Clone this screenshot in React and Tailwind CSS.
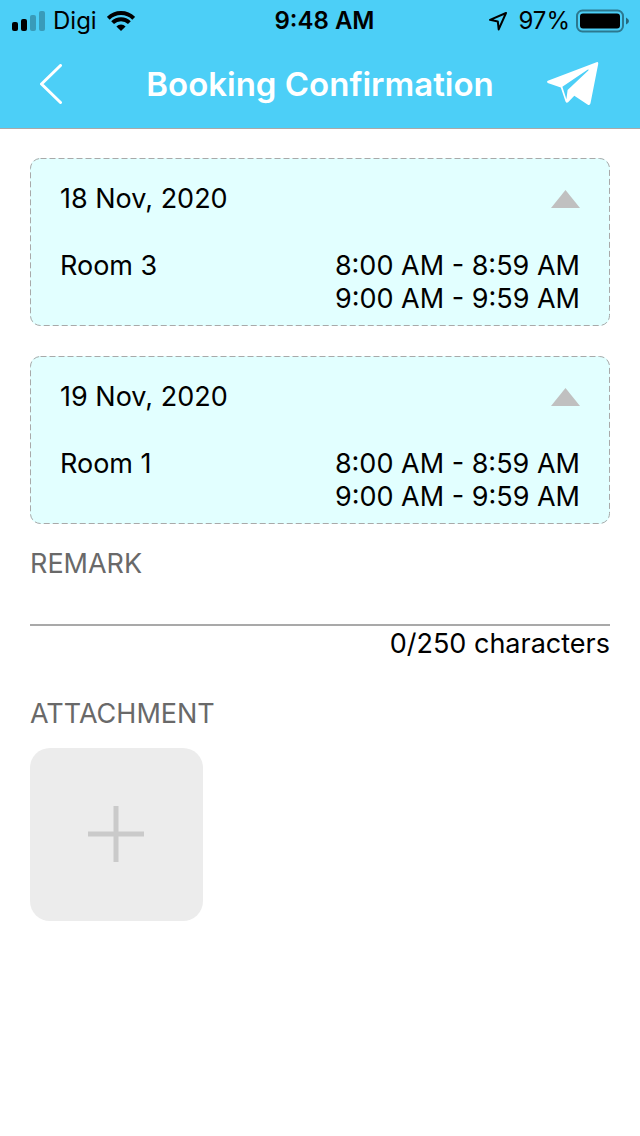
import React, { useState } from "react";

const bookings = [
  { date: "18 Nov, 2020", room: "Room 3", slots: ["8:00 AM - 8:59 AM", "9:00 AM - 9:59 AM"] },
  { date: "19 Nov, 2020", room: "Room 1", slots: ["8:00 AM - 8:59 AM", "9:00 AM - 9:59 AM"] },
];

function StatusBar() {
  return (
    <div className="grid h-10 grid-cols-[1fr_auto_1fr] items-center pl-3 pr-[11px] pt-px text-2xl leading-none text-black">
      <div className="flex items-center">
        <svg className="h-5 w-[33px]" viewBox="0 0 33 20" aria-hidden="true">
          <rect x="0" y="11" width="6" height="9" rx="2" />
          <rect x="9" y="8" width="6" height="12" rx="2" />
          <rect x="18" y="4" width="6" height="16" rx="2" opacity=".25" />
          <rect x="27" y="0" width="6" height="20" rx="2" opacity=".25" />
        </svg>
        <span className="ml-2">Digi</span>
        <svg className="ml-2.5 h-5 w-7" viewBox="0 0 28 20" aria-hidden="true">
          <g fill="none" stroke="#000" strokeWidth="4">
            <path d="M1.3 7.3a18 18 0 0 1 25.4 0" />
            <path d="M5.6 11.6a11.900 11.900 0 0 1 16.800 0" />
          </g>
          <path d="M14 20l-4.600-4.600a6.500 6.500 0 0 1 9.200 0z" />
        </svg>
      </div>
      <div className="pl-2 font-semibold">9:48 AM</div>
      <div className="flex items-center justify-end">
        <svg className="h-5 w-5" viewBox="0 0 20 20" fill="none" stroke="#000" strokeWidth="2" strokeLinejoin="round" aria-hidden="true">
          <path d="M18 2L2 8.800l7.800 1.600.900 8z" />
        </svg>
        <span className="ml-2.5">97%</span>
        <svg className="ml-1.5 h-6 w-[53px]" viewBox="0 0 53 24" aria-hidden="true">
          <rect x="1" y="1.500" width="46" height="21" rx="5.500" fill="none" stroke="#000" strokeOpacity=".42" strokeWidth="2" />
          <rect x="4" y="4.500" width="40" height="15" rx="3" />
          <path d="M50 8.500q3 1.500 3 3.500t-3 3.500z" opacity=".5" />
        </svg>
      </div>
    </div>
  );
}

function BookingCard({ date, room, slots }) {
  const [open, setOpen] = useState(true);
  return (
    <section className="relative rounded-[10px] bg-[#e2ffff] px-[30px] pb-[11px] pt-6">
      <svg className="pointer-events-none absolute inset-0 h-full w-full" aria-hidden="true">
        <rect className="h-[calc(100%-1px)] w-[calc(100%-1px)]" x=".5" y=".5" rx="10" fill="none" stroke="#a9a9a9" strokeDasharray="6 3" />
      </svg>
      <div className="flex items-center justify-between">
        <h2>{date}</h2>
        <button type="button" aria-label="Toggle details" aria-expanded={open} onClick={() => setOpen(!open)}>
          <svg className={open ? "h-[18px] w-[29px]" : "h-[18px] w-[29px] rotate-180"} viewBox="0 0 29 18" aria-hidden="true">
            <path d="M14.500 0L29 18H0z" fill="#c0c0c0" />
          </svg>
        </button>
      </div>
      {open && (
        <div className="mt-[34px] flex justify-between">
          <p>{room}</p>
          <ul>
            {slots.map((slot) => (
              <li key={slot}>{slot}</li>
            ))}
          </ul>
        </div>
      )}
    </section>
  );
}

export default function App() {
  const [remark, setRemark] = useState("");
  return (
    <div className="min-h-screen bg-white font-['Inter',sans-serif] text-[27px] leading-[33px] text-black">
      <header className="border-b border-[#a9a9a9] bg-[#4ccff7]">
        <StatusBar />
        <div className="grid h-[88px] grid-cols-[1fr_auto_1fr] items-center px-10">
          <button type="button" aria-label="Back" className="justify-self-start">
            <svg className="h-10 w-[22px]" viewBox="0 0 22 40" fill="none" stroke="#fff" strokeWidth="3" strokeLinecap="round" strokeLinejoin="round" aria-hidden="true">
              <path d="M20.500 1.500L1.500 20l19 18.500" />
            </svg>
          </button>
          <h1 className="text-[33px] font-semibold leading-10 text-white">Booking Confirmation</h1>
          <button type="button" aria-label="Send" className="justify-self-end">
            <svg className="h-11 w-[53px]" viewBox="0 0 53 44" fill="#fff" aria-hidden="true">
              <path d="M.800 18.700L49.500 .200q2-.500 1.700 1.700L43.500 41.300q-.700 2.700-3 1.200L27.300 33.700l-6.200 6.600q-1.700 1.200-2.600-.800L13.800 25.500 .700 20.900q-1.300-1.100.100-2.200zM15.400 24.700l4 12.600 1.200-9.300L41.300 8.600q1-1.500-.800-.900z" fillRule="evenodd" />
            </svg>
          </button>
        </div>
      </header>
      <main className="px-[30px] pt-[29px]">
        <div className="flex flex-col gap-[30px]">
          {bookings.map((b) => (
            <BookingCard key={b.date} {...b} />
          ))}
        </div>
        <label htmlFor="remark" className="mt-[23px] block text-[#696969]">REMARK</label>
        <input
          id="remark"
          type="text"
          maxLength={250}
          value={remark}
          onChange={(e) => setRemark(e.target.value)}
          className="block h-[46px] w-full border-b-2 border-[#a9a9a9] outline-none"
        />
        <p className="mt-px text-right">{remark.length}/250 characters</p>
        <h2 className="mt-[37px] text-[#696969]">ATTACHMENT</h2>
        <button type="button" aria-label="Add attachment" className="mt-[18px] flex size-[173px] items-center justify-center rounded-[20px] bg-[#ececec] pb-px pr-px">
          <svg className="size-14" viewBox="0 0 56 56" stroke="#cacaca" strokeWidth="5" aria-hidden="true">
            <path d="M28 0v56M0 28h56" />
          </svg>
        </button>
      </main>
    </div>
  );
}
